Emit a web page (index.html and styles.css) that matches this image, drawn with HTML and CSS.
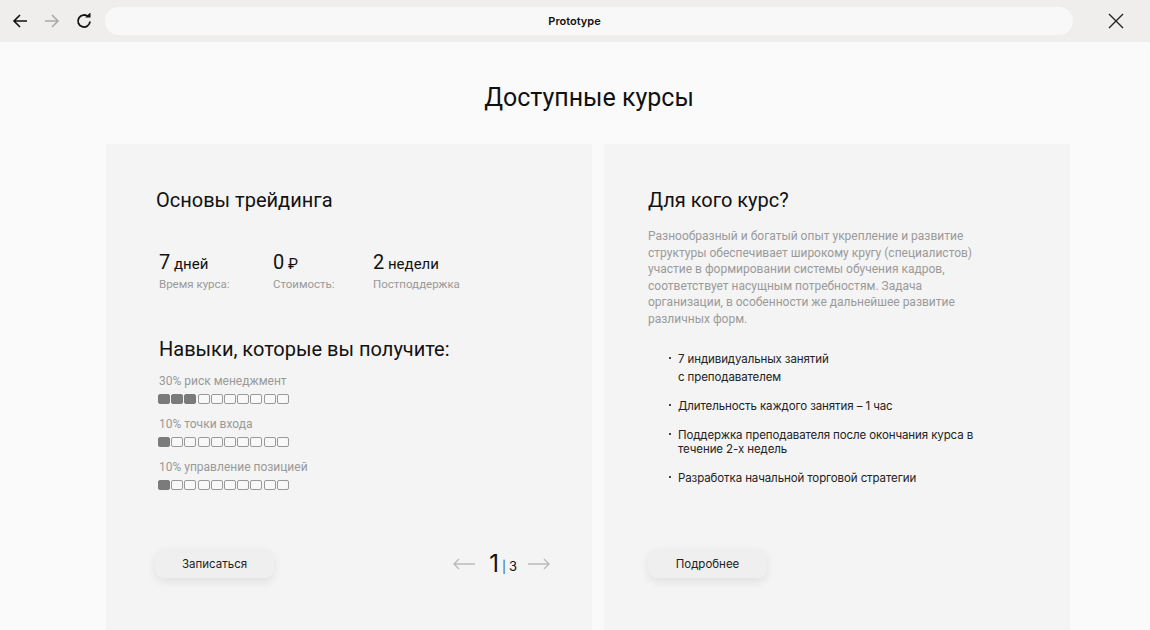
FILE: index.html
```html
<!DOCTYPE html>
<html lang="ru">
<head>
<meta charset="utf-8">
<title>Prototype</title>
<link rel="stylesheet" href="styles.css">
</head>
<body>
<header class="topbar">
  <div class="nav">
    <svg class="icon" viewBox="0 0 16 16" width="16" height="16"><path d="M15 8H2M8 2L2 8l6 6" fill="none" stroke="#111" stroke-width="1.6"/></svg>
    <svg class="icon" viewBox="0 0 16 16" width="16" height="16"><path d="M1 8h13M8 2l6 6-6 6" fill="none" stroke="#aaa" stroke-width="1.6"/></svg>
    <svg class="icon" viewBox="0 0 16 16" width="16" height="16"><path d="M14 8.5a6 6 0 1 1-1.8-4.8" fill="none" stroke="#111" stroke-width="1.8"/><path d="M9.2 4.6h5.3V-0.7z" fill="#111"/></svg>
  </div>
  <div class="url">Prototype</div>
  <svg class="close" viewBox="0 0 16 16" width="16" height="16"><path d="M1 1l14 14M15 1L1 15" stroke="#222" stroke-width="1.4"/></svg>
</header>
<main class="page">
  <h1 class="page-title">Доступные курсы</h1>
  <div class="cards">
    <section class="card card-left">
      <h2 class="card-title">Основы трейдинга</h2>
      <div class="stats">
        <div class="stat s1"><div class="stat-val"><span class="num">7</span> дней</div><div class="stat-label">Время курса:</div></div>
        <div class="stat s2"><div class="stat-val"><span class="num">0</span> ₽</div><div class="stat-label">Стоимость:</div></div>
        <div class="stat s3"><div class="stat-val"><span class="num">2</span> недели</div><div class="stat-label">Постподдержка</div></div>
      </div>
      <h3 class="skills-title">Навыки, которые вы получите:</h3>
      <div class="skills">
        <div class="skill">
          <div class="skill-label">30% риск менеджмент</div>
          <div class="bar"><i class="on"></i><i class="on"></i><i class="on"></i><i></i><i></i><i></i><i></i><i></i><i></i><i></i></div>
        </div>
        <div class="skill">
          <div class="skill-label">10% точки входа</div>
          <div class="bar"><i class="on"></i><i></i><i></i><i></i><i></i><i></i><i></i><i></i><i></i><i></i></div>
        </div>
        <div class="skill">
          <div class="skill-label">10% управление позицией</div>
          <div class="bar"><i class="on"></i><i></i><i></i><i></i><i></i><i></i><i></i><i></i><i></i><i></i></div>
        </div>
      </div>
      <div class="card-foot">
        <button class="btn">Записаться</button>
        <div class="pager">
          <svg viewBox="0 0 24 12" width="24" height="12"><path d="M23 6H2M7 1L2 6l5 5" fill="none" stroke="#bbb" stroke-width="1.4"/></svg>
          <span class="pg-cur">1</span><span class="pg-sep">|</span><span class="pg-tot">3</span>
          <svg viewBox="0 0 24 12" width="24" height="12"><path d="M1 6h21M17 1l5 5-5 5" fill="none" stroke="#bbb" stroke-width="1.4"/></svg>
        </div>
      </div>
    </section>
    <section class="card card-right">
      <h2 class="card-title">Для кого курс?</h2>
      <p class="desc">Разнообразный и богатый опыт укрепление и развитие структуры обеспечивает широкому кругу (специалистов) участие в формировании системы обучения кадров, соответствует насущным потребностям. Задача организации, в особенности же дальнейшее развитие различных форм.</p>
      <ul class="list">
        <li>7 индивидуальных занятий<span class="sub">с преподавателем</span></li>
        <li>Длительность каждого занятия – 1 час</li>
        <li>Поддержка преподавателя после окончания курса в течение 2-х недель</li>
        <li>Разработка начальной торговой стратегии</li>
      </ul>
      <div class="card-foot">
        <button class="btn">Подробнее</button>
      </div>
    </section>
  </div>
</main>
</body>
</html>
```
FILE: styles.css
```css
html, body {
  margin: 0;
  padding: 0;
  height: 630px;
  overflow: hidden;
}
body {
  background: #fafafa;
  font-family: Roboto, "Liberation Sans", sans-serif;
  color: #111;
}
.topbar {
  height: 42px;
  background: #efeeed;
  display: flex;
  align-items: center;
  box-sizing: border-box;
  padding: 0 0 0 12px;
}
.nav {
  display: flex;
  gap: 16px;
  align-items: center;
}
.icon { display: block; }
.url {
  margin-left: 13px;
  width: 968px;
  height: 28px;
  box-sizing: border-box;
  padding-right: 29px;
  border-radius: 14px;
  background: #f8f8f8;
  display: flex;
  align-items: center;
  justify-content: center;
  font-family: Inter, "Noto Sans", sans-serif;
  font-weight: 600;
  font-size: 11px;
  color: #111;
}
.close { margin-left: 35px; }
.page-title {
  margin: 0;
  padding-top: 41px;
  height: 61px;
  text-align: center;
  font-weight: 400;
  font-size: 25px;
  line-height: 30px;
  padding-left: 28px;
  box-sizing: content-box;
}
.cards {
  display: flex;
  gap: 12px;
  margin-left: 106px;
}
.card {
  background: #f4f4f4;
  height: 486px;
  box-sizing: border-box;
  display: flex;
  flex-direction: column;
}
.card-left { width: 486px; padding: 44px 0 0 50px; }
.card-right { width: 466px; padding: 44px 0 0 44px; }
.card-title {
  margin: 0;
  font-weight: 400;
  font-size: 20px;
  line-height: 24px;
}
.stats {
  display: flex;
  margin-top: 40px;
  padding-left: 3px;
}
.stat.s1 { width: 114px; }
.stat.s2 { width: 100px; }
.stat-val {
  font-size: 15px;
  line-height: 20px;
  color: #111;
}
.num { font-size: 20px; }
.stat-label {
  font-size: 11.5px;
  color: #999;
  line-height: 14px;
  margin-top: 3px;
}
.skills-title {
  margin: 46px 0 0 3px;
  font-weight: 400;
  font-size: 20px;
  line-height: 24px;
}
.skills {
  margin: 12px 0 0 2px;
  display: flex;
  flex-direction: column;
  gap: 12px;
}
.skill-label {
  font-size: 12px;
  line-height: 16px;
  color: #999;
  padding-left: 1px;
}
.bar {
  display: flex;
  gap: 1.2px;
  margin-top: 5px;
}
.bar i {
  display: block;
  width: 10px;
  height: 8px;
  border: 1px solid #999;
  border-radius: 2px;
  background: #f8f8f8;
}
.bar i.on {
  background: #7b7b7b;
  border-color: #7b7b7b;
}
.card-foot {
  margin-top: auto;
  margin-bottom: 52px;
  display: flex;
  align-items: center;
  justify-content: space-between;
}
.card-left .card-foot { margin-left: -1px; padding-right: 40px; }
.btn {
  width: 119px;
  height: 29px;
  border: none;
  border-radius: 9px;
  background: #efefef;
  box-shadow: 0 4px 10px rgba(0,0,0,0.08);
  font-family: Inter, "Noto Sans", sans-serif;
  font-size: 11.5px;
  color: #222;
  padding: 0;
}
.pager {
  display: flex;
  align-items: center;
  color: #111;
  margin-right: 1px;
}
.pager svg { display: block; }
.pg-cur {
  font-family: Inter, "Noto Sans", sans-serif;
  font-size: 24px;
  line-height: 24px;
  margin-left: 13px;
}
.pg-sep {
  font-family: Inter, sans-serif;
  font-size: 12px;
  margin: 6px 3px 0 3px;
  color: #1a4f7a;
}
.pg-tot {
  font-family: Inter, sans-serif;
  font-size: 13px;
  margin-top: 5px;
  margin-right: 10px;
}
.desc {
  margin: 16px 0 0 0;
  width: 330px;
  font-size: 12px;
  line-height: 16.6px;
  color: #9a9a9a;
}
.list {
  list-style: none;
  margin: 24px 0 0 21px;
  padding: 0;
  font-family: Inter, "Noto Sans", sans-serif;
  font-size: 11.5px;
  letter-spacing: -0.1px;
  line-height: 14px;
  color: #222;
  width: 320px;
}
.list li {
  position: relative;
  padding-left: 9px;
  margin-bottom: 15px;
}
.list li .sub {
  display: block;
  margin-top: 4px;
}
.list li::before {
  content: "";
  position: absolute;
  left: 0;
  top: 5px;
  width: 2px;
  height: 2px;
  background: #444;
}
```
